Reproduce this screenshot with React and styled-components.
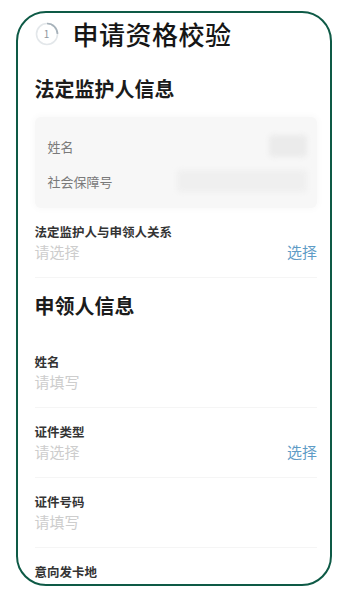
import React from 'react';
import styled, { createGlobalStyle } from 'styled-components';

const GlobalStyle = createGlobalStyle`
  html, body {
    margin: 0;
    padding: 0;
    background: #ffffff;
  }
  body {
    font-family: "Noto Sans CJK SC", "Noto Sans", sans-serif;
    -webkit-font-smoothing: antialiased;
  }
`;

const Page = styled.div`
  width: 344px;
  height: 600px;
  padding: 11px 12px 0 16px;
  box-sizing: border-box;
`;

const Frame = styled.div`
  width: 316px;
  height: 575px;
  box-sizing: border-box;
  border: 2.5px solid #0e5a46;
  border-radius: 30px;
  overflow: hidden;
  background: #ffffff;
  padding: 4px 13px 0 16.5px;
`;

const TitleRow = styled.div`
  display: flex;
  align-items: center;
  gap: 14px;
  height: 34px;
`;

const StepRing = styled.div`
  position: relative;
  width: 24px;
  height: 24px;
  flex: none;
  display: flex;
  align-items: center;
  justify-content: center;
  font-size: 10px;
  line-height: 1;
  color: #8f979e;
  svg {
    position: absolute;
    inset: 0;
  }
`;

const Title = styled.h1`
  margin: 0;
  font-size: 26px;
  letter-spacing: 0.5px;
  font-weight: 500;
  line-height: 34px;
  color: #161616;
`;

const SectionTitle = styled.h2`
  margin: ${p => p.$top}px 0 ${p => p.$bottom}px;
  font-size: 20px;
  font-weight: 700;
  line-height: 28px;
  color: #1b1b1b;
`;

const InfoCard = styled.div`
  background: #f7f7f7;
  border-radius: 6px;
  padding: 11.5px 10px 9.5px 13px;
  box-shadow: 0 0 6px 2px #fafafa;
`;

const InfoRow = styled.div`
  display: flex;
  align-items: center;
  justify-content: space-between;
  height: 35px;
`;

const InfoLabel = styled.span`
  font-size: 13px;
  color: #7a7a7a;
`;

const Blurred = styled.div`
  width: ${p => p.$w}px;
  height: ${p => p.$h}px;
  background: ${p => p.$bg};
  border-radius: 4px;
  filter: blur(2.5px);
`;

const Field = styled.div`
  padding: 16px 0;
  height: ${p => (p.$last ? 'auto' : '70px')};
  box-sizing: border-box;
  border-bottom: ${p => (p.$last ? 'none' : '1px solid #f5f5f5')};
`;

const FieldLabel = styled.div`
  font-size: 12.5px;
  font-weight: 700;
  line-height: 16px;
  color: #343434;
`;

const FieldValue = styled.div`
  margin-top: 2px;
  display: flex;
  justify-content: space-between;
  align-items: center;
  line-height: 20px;
`;

const Placeholder = styled.span`
  font-size: 15px;
  color: #cdcdcd;
`;

const PickLink = styled.span`
  font-size: 15px;
  color: #5f9cc6;
`;

function Ring() {
  return (
    <StepRing>
      <svg width="24" height="24" viewBox="0 0 24 24">
        <circle cx="12" cy="12" r="10.5" fill="none" stroke="#e3e7ea" strokeWidth="1.6" />
        <path d="M12 1.5 A10.5 10.5 0 0 1 22.5 12" fill="none" stroke="#a7b2ba" strokeWidth="1.6" />
      </svg>
      1
    </StepRing>
  );
}

const applicantFields = [
  { label: '姓名', hint: '请填写' },
  { label: '证件类型', hint: '请选择', pick: true },
  { label: '证件号码', hint: '请填写' },
];

export default function App() {
  return (
    <Page>
      <GlobalStyle />
      <Frame>
        <TitleRow>
          <Ring />
          <Title>申请资格校验</Title>
        </TitleRow>

        <SectionTitle $top={24} $bottom={14}>法定监护人信息</SectionTitle>
        <InfoCard>
          <InfoRow>
            <InfoLabel>姓名</InfoLabel>
            <Blurred $w={38} $h={22} $bg="#ebebeb" />
          </InfoRow>
          <InfoRow>
            <InfoLabel>社会保障号</InfoLabel>
            <Blurred $w={130} $h={22} $bg="#efefef" />
          </InfoRow>
        </InfoCard>

        <Field>
          <FieldLabel>法定监护人与申领人关系</FieldLabel>
          <FieldValue>
            <Placeholder>请选择</Placeholder>
            <PickLink>选择</PickLink>
          </FieldValue>
        </Field>

        <SectionTitle $top={14} $bottom={18}>申领人信息</SectionTitle>
        {applicantFields.map(f => (
          <Field key={f.label}>
            <FieldLabel>{f.label}</FieldLabel>
            <FieldValue>
              <Placeholder>{f.hint}</Placeholder>
              {f.pick && <PickLink>选择</PickLink>}
            </FieldValue>
          </Field>
        ))}
        <Field $last>
          <FieldLabel>意向发卡地</FieldLabel>
        </Field>
      </Frame>
    </Page>
  );
}
